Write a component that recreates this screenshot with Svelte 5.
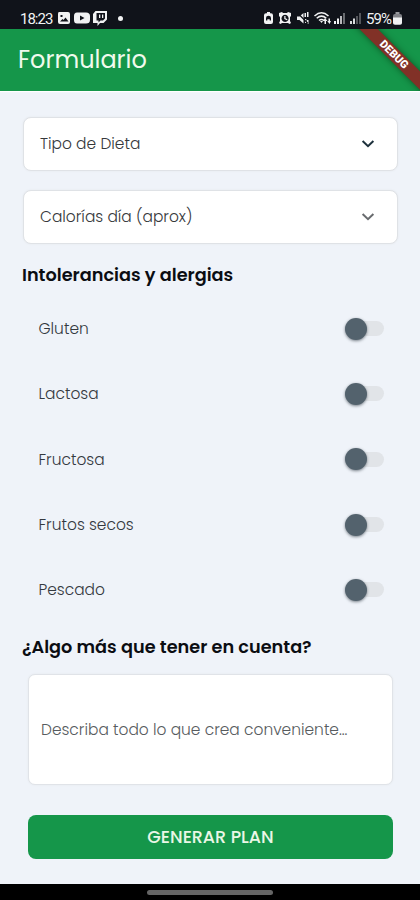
<script>
  const selects = [
    { label: 'Tipo de Dieta', dark: true },
    { label: 'Calorías día (aprox)', dark: false }
  ];
  const items = ['Gluten', 'Lactosa', 'Fructosa', 'Frutos secos', 'Pescado'];
</script>

<div class="screen">
  <div class="status">
    <span class="time">18:23</span>
    <svg class="left-icons" width="70" height="16" viewBox="0 0 70 16" fill="#f1f2f3">
      <path fill-rule="evenodd" d="M2 2h9q2 0 2 2v8q0 2-2 2H3q-2 0-2-2V4q0-2 1-2zM3 11.500h8.500L8.500 7.500l-2 2.500-1-1zM3.500 5v2h2V5z" />
      <path fill-rule="evenodd" d="M20 2.500h9q4 0 4 3.500v4q0 3.500-4 3.500h-9q-3 0-3-3.500V6q0-3.500 3-3.500zM23 5.500v5l4.500-2.500z" />
      <path fill-rule="evenodd" d="M38.500 1H50v8.500L46.500 13H43l-2.500 3v-3H36V4zM39.500 3v7.500h2v2l2-2h2.500l2-2V3zM42 4.500h1.300v3.500H42zM45 4.500h1.300v3.500H45z" />
      <circle cx="63.500" cy="8.500" r="2.500" />
    </svg>
    <svg class="right-icons" width="102" height="16" viewBox="0 0 102 16" fill="#f1f2f3">
      <path fill-rule="evenodd" d="M4 2h3v1.200h1q2 0 2 2V12q0 2-2 2H3q-2 0-2-2V5.200q0-2 2-2h1zM3 10.500h1.300V9.200h2.400v1.300H8V8Q8 5.800 5.500 5.800T3 8z" />
      <path fill-rule="evenodd" d="M16 3l3-1 1 1h4l1-1 3 1v3l-1 1v4l1 2-1.500 1-1.500-1h-6l-1.500 1-1.500-1 1-2V7l-1-1zM22 4.800a3.600 3.600 0 1 0 .1 0zM21.300 6h1.200v2.200l2 1-.6 1-2.600-1.300z" />
      <path d="M34 6.500h2.500l4-3.500v10.500l-4-3.500H34zM41.500 3h1.500v4h-1.500zM44 2h1.500v5H44zM42 9h1.300v4H42zM44 10h1.500v4H44z" />
      <path d="M34 2.500 45 13.500" stroke="#101318" stroke-width="1.300" />
      <g fill="none" stroke="#f1f2f3" stroke-width="1.500">
        <path d="M51.500 6Q58.500-.5 65.500 6" />
        <path d="M53.700 8.200q4.800-4.200 9.600 0" />
        <path d="M56 10.500q2.500-2 5 0" />
      </g>
      <path d="M57 11h3l-1.500 2zM62 8l2.500 3H63v3h-1.500v-3H60zM66.500 14 64.300 11h1.200V8.500H67V11h1z" />
      <path d="M71 11h2v3h-2zM74 8.500h2V14h-2z" />
      <path d="M77 6h2v8h-2z" opacity=".75" />
      <path d="M80 3h2v11h-2z" opacity=".4" />
      <path d="M87 11h2v3h-2zM90 8.500h2V14h-2z" opacity=".9" />
      <path d="M93 6h2v8h-2zM96 3h2v11h-2z" opacity=".3" />
    </svg>
    <span class="percent">59%</span>
    <svg class="battery" width="11" height="15" viewBox="0 0 11 15" fill="#f1f2f3">
      <path d="M3.500 1h4v2h-4z" opacity=".6" />
      <path d="M1 5q0-2 2-2h5q2 0 2 2v2H1z" opacity=".5" />
      <path d="M1 6.500h9V12q0 1.800-2 1.800H3q-2 0-2-1.800z" />
    </svg>
  </div>

  <header>
    <h1>Formulario</h1>
    <div class="corner"><div class="ribbon">DEBUG</div></div>
  </header>

  <main>
    <div class="selects">
      {#each selects as s}
        <div class="select" class:dark={s.dark}>
          <span>{s.label}</span>
          <svg width="14" height="10" viewBox="0 0 14 10"><path d="M1.600 2 7 7.200 12.400 2" /></svg>
        </div>
      {/each}
    </div>

    <h2 class="first">Intolerancias y alergias</h2>
    <div class="list">
      {#each items as item}
        <div class="row">
          <span>{item}</span>
          <div class="track"><div class="thumb"></div></div>
        </div>
      {/each}
    </div>

    <h2 class="second">¿Algo más que tener en cuenta?</h2>
    <div class="note">Describa todo lo que crea conveniente...</div>
    <button>GENERAR PLAN</button>
  </main>

  <footer><div class="pill"></div></footer>
</div>

<style>
  :global(body) { margin: 0; }
  .screen {
    width: 420px;
    height: 900px;
    display: flex;
    flex-direction: column;
    overflow: hidden;
    background: #eff3f9;
    font-family: Poppins, Inter, "Open Sans", sans-serif;
    white-space: nowrap;
  }
  .status {
    height: 29px;
    flex: none;
    box-sizing: border-box;
    padding: 8px 0 0 20px;
    display: flex;
    align-items: flex-start;
    background: #10131a;
    color: #f1f2f3;
    font-family: Roboto, sans-serif;
    font-size: 15px;
    line-height: 22px;
  }
  .time { width: 37px; letter-spacing: -1px; }
  .left-icons { margin-top: 2px; }
  .right-icons { margin: 2px 0 0 136px; }
  .percent { width: 26px; letter-spacing: -0.9px; margin-left: 1px; }
  .battery { margin-top: 3px; }
  header {
    position: relative;
    height: 62px;
    flex: none;
    background: #15964a;
    display: flex;
    align-items: center;
    padding-left: 18px;
    box-shadow: 0 1px 1px #ffffff;
  }
  h1 { margin: 0; color: #f0faed; font-size: 24px; font-weight: 400; line-height: 36px; }
  .corner { position: absolute; top: 0; right: 0; width: 75px; height: 62px; overflow: hidden; }
  .ribbon {
    position: absolute;
    left: -21px;
    top: 19px;
    width: 140px;
    height: 13px;
    transform: rotate(45deg);
    background: #813127;
    box-shadow: 0 0 6px rgba(0, 40, 10, 0.55);
    color: #fff;
    font: 900 11px/13px Roboto, sans-serif;
    text-align: center;
  }
  main { flex: 1; display: flex; flex-direction: column; padding: 26px 22px 0 23px; }
  .selects { display: flex; flex-direction: column; gap: 19px; }
  .select {
    height: 54px;
    box-sizing: border-box;
    display: flex;
    align-items: center;
    justify-content: space-between;
    padding: 0 22px 1px 16px;
    background: #fff;
    border: 1px solid #dfe2e6;
    border-radius: 8px;
    box-shadow: 0 0 2px #e3e6ea;
    font-size: 15.450px;
    font-weight: 300;
    color: #35383b;
  }
  .select path { fill: none; stroke: #686b6e; stroke-width: 2; }
  .select.dark path { stroke: #1d303c; }
  h2 { margin: 0 0 0 -1px; font-size: 17.700px; font-weight: 600; line-height: 26px; color: #0b0d12; }
  .first { margin-top: 18px; }
  .list { display: flex; flex-direction: column; margin-top: 8px; }
  .row {
    height: 65.300px;
    display: flex;
    align-items: center;
    justify-content: space-between;
    padding: 0 14px 0 15.500px;
    font-size: 15.450px;
    font-weight: 300;
    color: #34393f;
  }
  .track { width: 36px; height: 15px; display: flex; align-items: center; border-radius: 8px; background: #e1e4e8; }
  .thumb { width: 22px; height: 22px; flex: none; margin-left: -3px; border-radius: 50%; background: #53626d; box-shadow: 0 1px 3px rgba(40, 50, 60, 0.6); }
  .second { margin-top: 12px; }
  .note {
    margin: 14px 5px 0;
    height: 111px;
    box-sizing: border-box;
    display: flex;
    align-items: center;
    padding-left: 12px;
    background: #fff;
    border: 1px solid #e0e3e8;
    border-radius: 7px;
    box-shadow: 0 0 2px #e3e6ea;
    font-size: 15.450px;
    font-weight: 300;
    color: #575c60;
  }
  button {
    margin: 30px 5px 0;
    height: 44px;
    flex: none;
    border: 0;
    border-radius: 8px;
    background: #15964a;
    color: #eaf7e6;
    font-family: inherit;
    font-size: 17.500px;
    font-weight: 500;
  }
  footer { height: 16px; flex: none; background: #000; display: flex; justify-content: center; align-items: center; }
  .pill { width: 126px; height: 5px; border-radius: 3px; background: #656565; }
</style>
